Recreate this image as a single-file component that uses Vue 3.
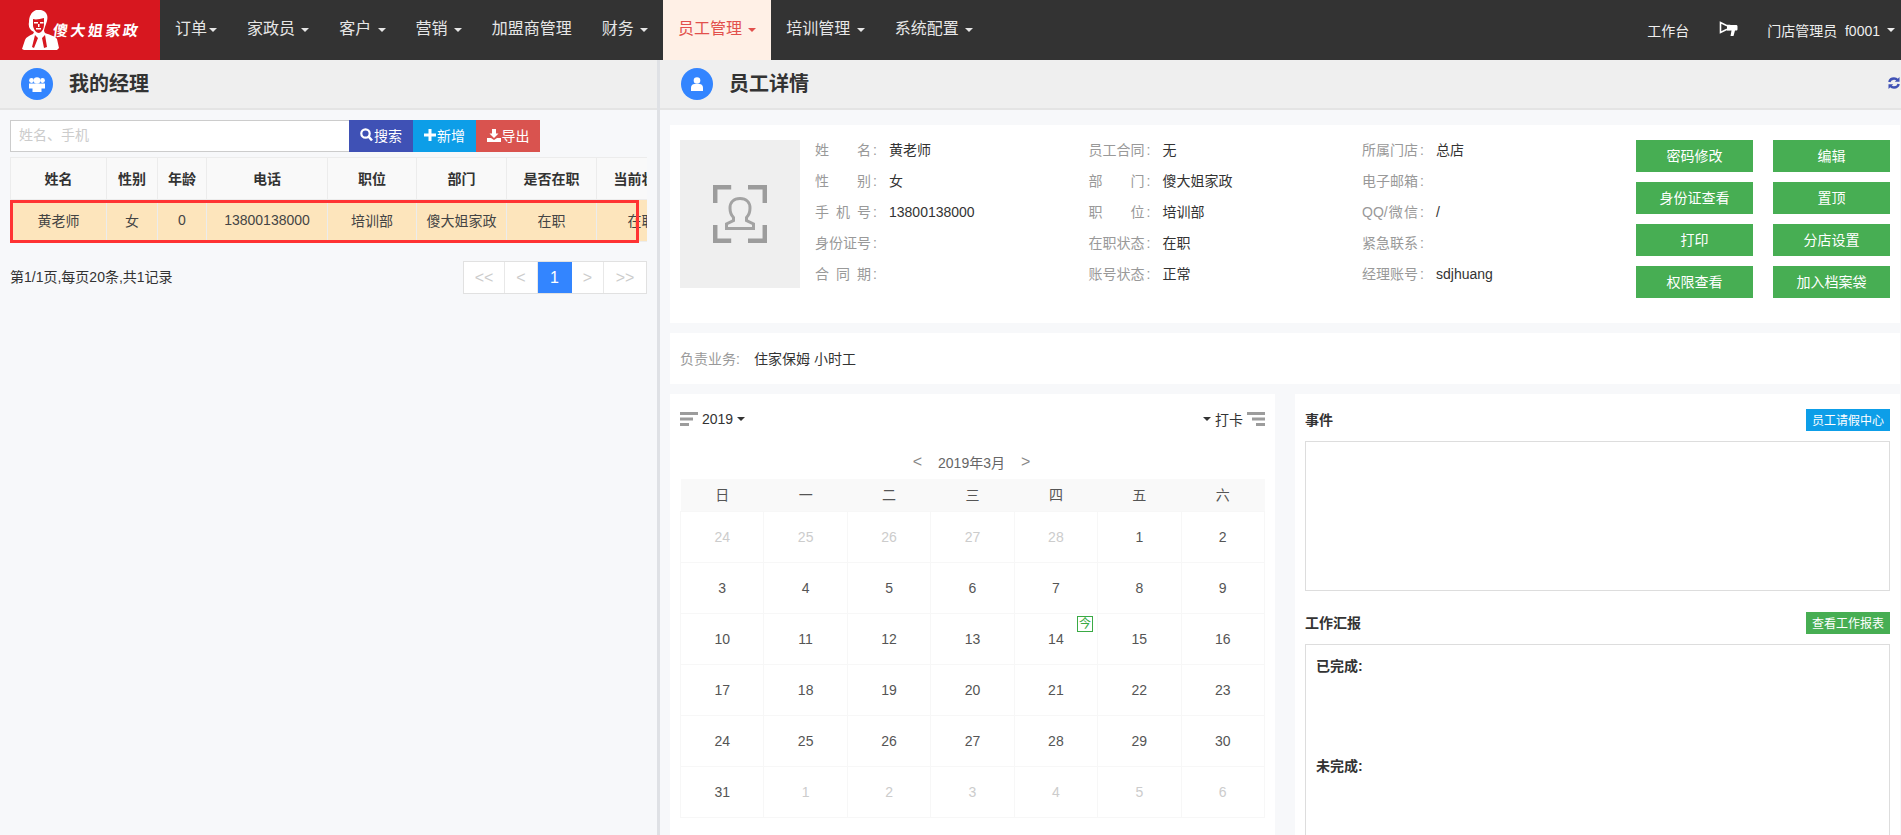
<script setup>
const navItems = [
  { text: '订单', tight: true },
  { text: '家政员' },
  { text: '客户' },
  { text: '营销' },
  { text: '加盟商管理', plain: true },
  { text: '财务' },
  { text: '员工管理', active: true },
  { text: '培训管理' },
  { text: '系统配置' }
]
const headers = ['姓名', '性别', '年龄', '电话', '职位', '部门', '是否在职', '当前状态']
const row = ['黄老师', '女', '0', '13800138000', '培训部', '傻大姐家政', '在职', '在职']
const pages = [
  { t: '<<', w: 41 },
  { t: '<', w: 33 },
  { t: '1', w: 34, active: true },
  { t: '>', w: 32 },
  { t: '>>', w: 42 }
]
const info = [
  [
    { l: '姓名', v: '黄老师' },
    { l: '性别', v: '女' },
    { l: '手机号', v: '13800138000' },
    { l: '身份证号', v: '' },
    { l: '合同期', v: '' }
  ],
  [
    { l: '员工合同', v: '无' },
    { l: '部门', v: '傻大姐家政' },
    { l: '职位', v: '培训部' },
    { l: '在职状态', v: '在职' },
    { l: '账号状态', v: '正常' }
  ],
  [
    { l: '所属门店', v: '总店' },
    { l: '电子邮箱', v: '' },
    { l: 'QQ/微信', v: '/' },
    { l: '紧急联系', v: '' },
    { l: '经理账号', v: 'sdjhuang' }
  ]
]
const actions = ['密码修改', '编辑', '身份证查看', '置顶', '打印', '分店设置', '权限查看', '加入档案袋']
const weekdays = ['日', '一', '二', '三', '四', '五', '六']
const weeks = [
  [[24, 1], [25, 1], [26, 1], [27, 1], [28, 1], [1], [2]],
  [[3], [4], [5], [6], [7], [8], [9]],
  [[10], [11], [12], [13], [14], [15], [16]],
  [[17], [18], [19], [20], [21], [22], [23]],
  [[24], [25], [26], [27], [28], [29], [30]],
  [[31], [1, 1], [2, 1], [3, 1], [4, 1], [5, 1], [6, 1]]
]
</script>

<template>
  <div class="page">
    <header class="nav">
      <div class="logo">
        <svg class="logo-man" width="37" height="40" viewBox="0 0 37 40">
          <path fill="#fff" d="M14 0c5-1 10 1 11 5 1 3 0 6-1 9-1 3-2 5-2 7l1 2c5 2 10 3 12 6l2 9-2 2H2l-2-1 3-9c1-3 4-4 8-6l1-2C8 20 6 17 7 12 7 7 9 2 14 0z" />
          <path fill="#d7171f" d="M11 9c3 1 7 0 11-1l0 6c0 5-2 8-5 9-3 0-5-3-6-7z" />
          <path fill="#fff" d="M12 12h4v1.500h-4zM18 12h3.500v1.500H18zM14 18h5v1.500h-5zM16 14h1.500v3H16z" />
          <path fill="#d7171f" d="M13 25l3 3-4 10-2-1zM23 25l-3 3 2 10 3-1z" />
        </svg>
        <span class="logo-text">傻大姐家政</span>
      </div>
      <ul class="nav-list">
        <li v-for="n in navItems" :key="n.text" class="nav-item" :class="{ active: n.active }">
          {{ n.text }}<i v-if="!n.plain" class="caret" :class="n.tight ? 'tight' : 'spaced'"></i>
        </li>
      </ul>
      <div class="nav-right">
        <span class="workbench">工作台</span>
        <svg class="horn" width="19" height="16" viewBox="0 0 19 16">
          <path fill="none" stroke="#fff" stroke-width="1.600" d="M1.500 1.500v10l6-3h3V4.500h-3z" />
          <path fill="#fff" d="M8 4h9c1 0 1.500.5 1.500 1.500V8c0 1-.5 1.500-1.500 1.500h-1L14.500 15H11.500l1-5.500H8z" />
        </svg>
        <span class="user">门店管理员&nbsp;&nbsp;f0001</span>
        <i class="caret user-caret"></i>
      </div>
    </header>

    <div class="main">
      <section class="left">
        <div class="sub-head">
          <span class="round-icon">
            <svg width="18" height="15" viewBox="0 0 18 15" fill="#fff">
              <circle cx="3.500" cy="3.500" r="2.400" />
              <circle cx="14.500" cy="3.500" r="2.400" />
              <circle cx="9" cy="3.500" r="3.300" />
              <path d="M1 6.500h16v5H1z" />
              <path d="M4.500 7h9v8h-9z" />
            </svg>
          </span>
          <h2 class="sub-title">我的经理</h2>
        </div>
        <div class="search-row">
          <input class="search-input" placeholder="姓名、手机" />
          <button class="tool-btn indigo">
            <svg width="13" height="14" viewBox="0 0 13 14"><circle cx="5.500" cy="5.500" r="4.200" fill="none" stroke="#fff" stroke-width="2.200" /><path d="M8.500 8.500l3.500 4" stroke="#fff" stroke-width="2.600" /></svg>搜索
          </button>
          <button class="tool-btn sky">
            <svg width="12" height="12" viewBox="0 0 12 12"><path fill="#fff" d="M4.500 0h3v4.500H12v3H7.500V12h-3V7.500H0v-3h4.500z" /></svg>新增
          </button>
          <button class="tool-btn red">
            <svg width="14" height="13" viewBox="0 0 14 13"><path fill="#fff" d="M5 0h4v4.500h2.500L7 9 2.500 4.500H5zM0 9h4l3 2 3-2h4v4H0z" /></svg>导出
          </button>
        </div>
        <div class="table-wrap">
          <table class="staff-table">
            <colgroup>
              <col style="width:96px" /><col style="width:51px" /><col style="width:49px" /><col style="width:121px" />
              <col style="width:89px" /><col style="width:90px" /><col style="width:90px" /><col style="width:90px" />
            </colgroup>
            <thead>
              <tr><th v-for="h in headers" :key="h">{{ h }}</th></tr>
            </thead>
            <tbody>
              <tr><td v-for="(c, i) in row" :key="i">{{ c }}</td></tr>
            </tbody>
          </table>
          <div class="mark"></div>
        </div>
        <div class="pager-row">
          <span class="pager-info">第1/1页,每页20条,共1记录</span>
          <div class="pager">
            <span v-for="p in pages" :key="p.t" class="page-cell" :class="{ active: p.active }" :style="{ width: p.w + 'px' }">{{ p.t }}</span>
          </div>
        </div>
      </section>

      <div class="split"></div>

      <section class="right">
        <div class="sub-head">
          <span class="round-icon user-round">
            <svg width="12" height="14" viewBox="0 0 12 14" fill="#fff">
              <circle cx="6" cy="3.500" r="3.300" />
              <path d="M0 14v-3.500C0 8.500 1.500 7.200 3.500 7h5C10.500 7.200 12 8.500 12 10.500V14z" />
            </svg>
          </span>
          <h2 class="sub-title">员工详情</h2>
          <svg class="refresh" width="12" height="12" viewBox="0 0 12 12">
            <path fill="none" stroke="#3f51b5" stroke-width="2.400" d="M1.300 5C1.800 3 3.700 1.500 6 1.500c1.500 0 2.700.6 3.600 1.600M10.700 7C10.200 9 8.300 10.500 6 10.500c-1.500 0-2.700-.6-3.600-1.600" />
            <path fill="#3f51b5" d="M11.500 0v4.800H6.800zM.5 12V7.200h4.700z" />
          </svg>
        </div>
        <div class="content">
          <div class="card profile">
            <div class="avatar">
              <svg width="54" height="58" viewBox="0 0 54 58">
                <path fill="none" stroke="#9c9c9c" stroke-width="4.500" d="M2.200 18V2.200h16M35 2.200h16.800V18M2.200 40v15.800h16M35 55.800h16.800V40" />
                <path fill="none" stroke="#a3a3a3" stroke-width="3" d="M27 13.500c-6.500 0-10 4-10 9.500 0 4 1.500 7.500 3.500 9.500v3l-7 3.500v4.500h27v-4.500l-7-3.500v-3c2-2 3.500-5.500 3.500-9.500 0-5.500-3.500-9.500-10-9.500z" />
              </svg>
            </div>
            <div class="info">
              <div v-for="(col, ci) in info" :key="ci" class="info-col">
                <div v-for="it in col" :key="it.l" class="info-row">
                  <span class="info-label"><span class="just">{{ it.l }}</span><span class="colon">:</span></span>
                  <span class="info-value">{{ it.v }}</span>
                </div>
              </div>
            </div>
            <div class="actions">
              <button v-for="a in actions" :key="a" class="act-btn">{{ a }}</button>
            </div>
          </div>
          <div class="card duty">
            <span class="duty-label">负责业务:</span>
            <span class="duty-value">住家保姆 小时工</span>
          </div>
          <div class="bottom">
            <div class="card calendar">
              <div class="cal-top">
                <div class="cal-side">
                  <svg width="18" height="14" viewBox="0 0 18 14" fill="#9c9c9c"><path d="M0 0h18v3H0zM0 5.500h13v3H0zM0 11h9v3H0z" /></svg>
                  <span class="year">2019</span><i class="caret dark"></i>
                </div>
                <div class="cal-side">
                  <i class="caret dark"></i><span class="punch">打卡</span>
                  <svg width="18" height="14" viewBox="0 0 18 14" fill="#9c9c9c"><path d="M0 0h18v3H0zM5 5.500h13v3H5zM9 11h9v3H9z" /></svg>
                </div>
              </div>
              <div class="month">
                <span class="arrow">&lt;</span>
                <span class="month-text">2019年3月</span>
                <span class="arrow">&gt;</span>
              </div>
              <table class="cal-table">
                <thead>
                  <tr><th v-for="d in weekdays" :key="d">{{ d }}</th></tr>
                </thead>
                <tbody>
                  <tr v-for="(w, wi) in weeks" :key="wi">
                    <td v-for="(d, di) in w" :key="di" :class="{ muted: d[1] }">
                      {{ d[0] }}<span v-if="wi === 2 && di === 4" class="today">今</span>
                    </td>
                  </tr>
                </tbody>
              </table>
            </div>
            <div class="card side">
              <div class="side-head">
                <span class="side-title">事件</span>
                <button class="mini-btn sky">员工请假中心</button>
              </div>
              <div class="event-box"></div>
              <div class="side-head report-head">
                <span class="side-title">工作汇报</span>
                <button class="mini-btn green">查看工作报表</button>
              </div>
              <div class="report-box">
                <p class="report-line">已完成:</p>
                <p class="report-line">未完成:</p>
              </div>
            </div>
          </div>
        </div>
      </section>
    </div>
  </div>
</template>

<style>
html, body { margin: 0; height: 835px; overflow: hidden; }
</style>

<style scoped>
* { box-sizing: border-box; }
.page {
  width: 1901px;
  height: 835px;
  overflow: hidden;
  display: flex;
  flex-direction: column;
  font-family: "Liberation Sans", "Noto Sans CJK SC", sans-serif;
  font-size: 14px;
  color: #333;
  background: #f7f8fa;
}
.nav { height: 60px; flex: none; display: flex; background: #333; color: #eee; }
.logo { width: 160px; height: 60px; background: #d7171f; display: flex; align-items: center; padding-left: 22px; }
.logo-man { flex: none; }
.logo-text {
  color: #fff;
  font-size: 15px;
  font-weight: 700;
  font-family: "Noto Sans CJK SC", sans-serif;
  margin-left: -6px;
  letter-spacing: 2.500px;
  white-space: nowrap;
  transform: skewX(-8deg);
  line-height: 20px;
}
.nav-list { display: flex; margin: 0; padding: 0; list-style: none; }
.nav-item { padding: 0 15px; height: 60px; line-height: 58px; font-size: 16px; white-space: nowrap; color: #e6e6e6; }
.nav-item.active { background: #fff0e6; color: #e2504c; }
.caret {
  display: inline-block;
  width: 0;
  height: 0;
  vertical-align: middle;
  border-top: 4px solid currentColor;
  border-left: 4px solid transparent;
  border-right: 4px solid transparent;
}
.caret.tight { margin-left: 2px; }
.caret.spaced { margin-left: 6.250px; }
.caret.dark { color: #333; }
.nav-right { margin-left: auto; display: flex; align-items: center; padding-right: 6px; white-space: nowrap; }
.workbench { margin-right: 30px; }
.horn { margin-right: 29px; margin-top: -3px; }
.user-caret { margin-left: 7px; }
.main { flex: 1; min-height: 0; display: flex; }
.left { width: 657px; flex: none; }
.split { width: 3px; flex: none; background: #dfe1e5; }
.right { flex: 1; min-width: 0; display: flex; flex-direction: column; }
.sub-head {
  height: 50px;
  flex: none;
  background: #efefef;
  border-bottom: 2px solid #e4e4e4;
  display: flex;
  align-items: center;
  padding-left: 21px;
  position: relative;
}
.round-icon { width: 32px; height: 32px; border-radius: 50%; background: #3385ff; display: flex; align-items: center; justify-content: center; flex: none; }
.sub-title { margin: 0 0 0 16px; font-size: 20px; line-height: 28px; font-weight: 700; color: #333; }
.refresh { position: absolute; right: 1px; top: 17px; }
.search-row { display: flex; margin: 10px 0 0 10px; height: 32px; }
.search-input {
  width: 339px;
  height: 32px;
  border: 1px solid #ccc;
  border-width: 1px 0 1px 1px;
  padding: 0 8px 2px;
  font: inherit;
  background: #fff;
  outline: none;
}
.search-input::placeholder { color: #ccc; }
.tool-btn {
  width: 64px;
  height: 32px;
  border: 0;
  padding: 0 0 2px;
  color: #fff;
  font: inherit;
  display: flex;
  align-items: center;
  justify-content: center;
  gap: 1px;
}
.tool-btn.sky { width: 63px; }
.indigo { background: #3f51b5; }
.sky { background: #0d9ee8; }
.red { background: #d9534f; }
.table-wrap { position: relative; margin: 5px 0 0 10px; width: 637px; height: 86px; overflow: hidden; }
.staff-table { table-layout: fixed; width: 676px; border-collapse: collapse; border-top: 1px solid #ddd; border-left: 1px solid #ddd; }
.staff-table th, .staff-table td { border: 1px solid #ececec; text-align: center; padding: 0 0 2px; white-space: nowrap; overflow: hidden; }
.staff-table th { height: 42px; background: #f9f9f9; font-weight: 700; color: #333; }
.staff-table td { height: 42px; background: #fde5bc; color: #444; }
.mark { position: absolute; left: 0; top: 43px; width: 629px; height: 43px; border: 3px solid #f33; }
.pager-row { display: flex; justify-content: space-between; align-items: center; margin: 18px 10px 0 10px; height: 33px; }
.pager-info { color: #333; margin-top: -3px; }
.pager { display: flex; border: 1px solid #e1e1e1; height: 33px; background: #fff; }
.page-cell { display: flex; align-items: center; justify-content: center; color: #ccc; border-right: 1px solid #e8e8e8; font-size: 16px; }
.page-cell:last-child { border-right: 0; }
.page-cell.active { background: #3385ff; color: #fff; border-color: #3385ff; }
.content { flex: 1; min-height: 0; padding: 15px 1px 0 10px; overflow: hidden; }
.card { background: #fff; }
.profile { height: 198px; padding: 15px 10px 0 10px; display: flex; }
.avatar { width: 120px; height: 148px; background: #efefef; flex: none; display: flex; align-items: center; justify-content: center; }
.info { display: flex; margin-left: 15px; width: 821px; flex: none; }
.info-col { width: 273.500px; flex: none; margin-top: -6px; }
.info-row { height: 31px; line-height: 20px; display: flex; align-items: center; }
.info-label { width: 74px; flex: none; color: #999; display: flex; }
.just { width: 56px; text-align: justify; text-align-last: justify; white-space: normal; }
.colon { margin-left: 2px; }
.info-value { color: #333; }
.actions { margin-left: auto; width: 254px; display: grid; grid-template-columns: 117px 117px; column-gap: 20px; row-gap: 10px; grid-auto-rows: 32px; }
.act-btn { border: 0; background: #47ae53; color: #fff; font: inherit; padding: 0 0 2px; }
.duty { height: 51px; margin-top: 10px; display: flex; align-items: center; padding: 0 0 2px 10px; }
.duty-label { color: #999; width: 74px; flex: none; }
.duty-value { color: #333; }
.bottom { display: flex; gap: 20px; margin-top: 10px; }
.calendar { width: 605px; height: 500px; padding: 0 10px; }
.cal-top { height: 50px; display: flex; justify-content: space-between; align-items: center; }
.cal-side { display: flex; align-items: center; }
.year { margin: 0 4px 0 4px; }
.punch { margin: 0 4px 0 4px; }
.month { height: 35px; display: flex; align-items: center; justify-content: center; color: #666; padding-right: 2px; }
.month-text { margin: 0 16px 0 16px; }
.arrow { color: #888; font-size: 16px; }
.cal-table { width: 585px; table-layout: fixed; border-collapse: collapse; }
.cal-table th { height: 32px; background: #f9f9f9; font-weight: 400; color: #555; padding: 0 0 2px; }
.cal-table td { height: 51px; text-align: center; border: 1px solid #f7f7f7; color: #555; padding: 0; position: relative; }
.cal-table td.muted { color: #ccc; }
.today {
  position: absolute;
  top: 2px;
  right: 4px;
  width: 16px;
  height: 16px;
  border: 1px solid #3aaa45;
  color: #3aaa45;
  font-size: 12px;
  line-height: 14px;
  text-align: center;
}
.side { flex: 1; height: 500px; padding: 15px 10px 0 10px; }
.side-head { height: 22px; display: flex; justify-content: space-between; align-items: center; }
.side-title { font-weight: 700; color: #333; margin-top: -3px; }
.mini-btn { width: 84px; height: 22px; border: 0; padding: 0 0 1px; color: #fff; font: inherit; font-size: 12px; }
.mini-btn.green { background: #47ae53; }
.event-box { height: 150px; margin-top: 10px; border: 1px solid #ddd; }
.report-head { margin-top: 21px; }
.report-box { height: 300px; margin-top: 10px; border: 1px solid #ddd; padding: 11px 10px; }
.report-line { margin: 0 0 80px; font-weight: 700; line-height: 20px; color: #333; }
</style>
